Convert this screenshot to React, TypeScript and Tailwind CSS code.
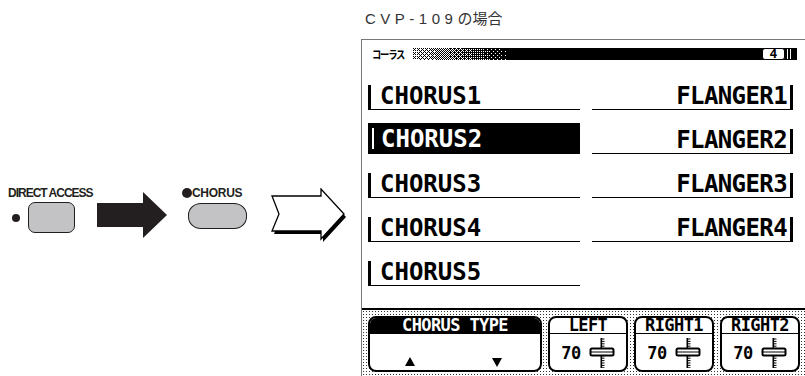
import React from "react";

const lcd = "font-['DejaVu_Sans_Mono','Liberation_Mono',monospace] font-bold";
const helv = "font-['Liberation_Sans',Arial,sans-serif] font-bold";

// ordered dither for the header fade
const bayer = [
  [0, 8, 2, 10],
  [12, 4, 14, 6],
  [3, 11, 1, 9],
  [15, 7, 13, 5],
];
function ditherPath(w: number, h: number) {
  let d = "";
  for (let x = 0; x < w; x++) {
    for (let y = 0; y < h; y++) {
      const t = 0.3 + 0.7 * (x / w);
      if ((bayer[y % 4][x % 4] + 0.5) / 16 < t) d += `M${x} ${y}h1v1h-1z`;
    }
  }
  return d;
}
const DITHER = ditherPath(100, 12);

function SolidArrow() {
  return (
    <svg width="70" height="46" viewBox="0 0 70 46" className="shrink-0">
      <path d="M0 11H46V0L70 23L46 46V35H0Z" fill="#231f20" />
    </svg>
  );
}

function OutlineArrow() {
  const pts = "1,8 50,8 50,1 73,26 50,51 50,43 1,43 8,26";
  return (
    <svg width="78" height="56" viewBox="0 0 78 56" className="shrink-0">
      <polygon points={pts} transform="translate(2,3)" fill="#000" />
      <polygon points={pts} fill="#fff" stroke="#000" strokeWidth="1.3" strokeLinejoin="miter" />
    </svg>
  );
}

function Fader() {
  const ticks = [];
  for (let y = 1; y < 30; y += 2.4) ticks.push(`M13 ${y.toFixed(1)}h2.5`);
  return (
    <svg width="26" height="30" viewBox="0 0 26 30">
      <rect x="11.5" y="0" width="1.6" height="30" fill="#000" />
      <path d={ticks.join("")} stroke="#000" strokeWidth="1" />
      <rect x="1.5" y="10.5" width="23" height="7" rx="1.5" fill="#fff" stroke="#000" strokeWidth="2" />
      <path d="M2 14H24" stroke="#000" strokeWidth="1" />
    </svg>
  );
}

function Tri({ down }: { down?: boolean }) {
  return (
    <svg width="10" height="10" viewBox="0 0 10 10">
      <path d={down ? "M0 1H10L5 10Z" : "M5 0L10 9H0Z"} fill="#000" />
    </svg>
  );
}

function LeftCell({ label, selected }: { label: string; selected?: boolean }) {
  if (selected) {
    return (
      <div className="ml-[6px] w-[212px] h-[31px] bg-black flex items-center">
        <div className="ml-[4px] w-[2px] h-[21px] bg-white" />
        <span className={`${lcd} ml-[7px] text-white text-[24px] leading-[22px]`}>{label}</span>
      </div>
    );
  }
  return (
    <div className="ml-[6px] w-[212px] h-[25px] border-l-[3px] border-b border-black">
      <span className={`${lcd} block pl-[9px] text-black text-[24px] leading-[22px]`}>{label}</span>
    </div>
  );
}

function RightCell({ label }: { label?: string }) {
  if (!label) return null;
  return (
    <div className="ml-[12px] w-[201px] h-[25px] border-r-[3px] border-b border-black">
      <span className={`${lcd} block pr-[3px] text-right text-black text-[24px] leading-[22px] tracking-[-0.6px]`}>{label}</span>
    </div>
  );
}

const rows = [
  { l: "CHORUS1", r: "FLANGER1" },
  { l: "CHORUS2", r: "FLANGER2", sel: true },
  { l: "CHORUS3", r: "FLANGER3" },
  { l: "CHORUS4", r: "FLANGER4" },
  { l: "CHORUS5" },
];

function PanButton({ title }: { title: string }) {
  return (
    <div className="w-[80px] h-[56px] border-2 border-black rounded-[8px] bg-white overflow-hidden flex flex-col">
      <div className={`${lcd} h-[16px] border-b border-black text-center text-[17px] leading-[15px] tracking-[-0.6px]`}>{title}</div>
      <div className="flex-1 flex items-center justify-center gap-[8px] pt-[2px]">
        <span className={`${lcd} text-[17px] leading-[18px] tracking-[-0.6px]`}>70</span>
        <Fader />
      </div>
    </div>
  );
}

export default function App() {
  return (
    <div className="w-[805px] h-[376px] bg-white flex overflow-hidden">
      {/* left: key sequence */}
      <div className="w-[361px] shrink-0 flex items-start pt-[188px] pl-[8px]">
        <div className="w-[86px] shrink-0">
          <div className={`${helv} text-[12px] leading-[10px] h-[10px] tracking-[-1px] text-[#231f20]`}>DIRECT ACCESS</div>
          <div className="flex items-center mt-[4px]">
            <div className="ml-[4px] w-[8px] h-[8px] rounded-full bg-[#231f20]" />
            <div className="ml-[8px] w-[47px] h-[31px] rounded-[7px] border border-[#231f20] bg-[#c3c3c5]" />
          </div>
        </div>
        <div className="ml-[3px] mt-[4px]">
          <SolidArrow />
        </div>
        <div className="ml-[15px] w-[70px] shrink-0">
          <div className="flex items-center h-[10px]">
            <div className="w-[10px] h-[10px] rounded-full bg-[#231f20]" />
            <span className={`${helv} text-[12px] leading-[10px] tracking-[-0.3px] text-[#231f20]`}>CHORUS</span>
          </div>
          <div className="ml-[6px] mt-[5px] w-[59px] h-[26px] rounded-[13px/12px] border border-[#231f20] bg-[#c3c3c5]" />
        </div>
        <div className="ml-[19px]">
          <OutlineArrow />
        </div>
      </div>

      {/* right: LCD page */}
      <div className="flex-1 flex flex-col">
        <div className="h-[39px] pt-[9px] pl-[4px] text-[15px] leading-[20px] text-[#333] font-['Liberation_Sans','Noto_Sans_CJK_JP',sans-serif]">
          <span className="tracking-[4.5px]">CVP-109</span>
          <span>の場合</span>
        </div>
        <div className="flex-1 border-t border-l border-[#777] flex flex-col">
          <div className="mt-[8px] h-[12px] flex items-stretch mr-[8px]">
            <div className="w-[51px] pl-[10px] flex items-center">
              <span className="text-[11px] leading-[12px] font-bold font-['Noto_Sans_CJK_JP',sans-serif] tracking-[-1.5px] scale-x-[0.85] origin-left">コーラス</span>
            </div>
            <svg width="100" height="12" viewBox="0 0 100 12" shapeRendering="crispEdges" className="shrink-0">
              <path d={DITHER} fill="#000" />
            </svg>
            <div className="flex-1 bg-black flex items-center justify-end">
              <div className={`${lcd} w-[23px] h-[12px] rounded-[3px] bg-white border border-black flex items-center justify-center text-[13px] leading-[10px]`}>4</div>
              <div className="ml-[2px] w-[1px] h-[10px] bg-white" />
              <div className="ml-[2px] w-[1px] h-[10px] bg-white" />
              <div className="w-[6px]" />
            </div>
          </div>

          <div className="mt-[6px] flex flex-col">
            {rows.map((r) => (
              <div key={r.l} className="h-[44px] flex items-end">
                <LeftCell label={r.l} selected={r.sel} />
                <RightCell label={r.r} />
              </div>
            ))}
          </div>

          <div className="mt-[22px] h-[2px] bg-black" />
          <div className="flex-1 pl-[6px] pt-[6px] flex gap-[6px] bg-[radial-gradient(circle,#333_0.7px,transparent_1px)] bg-[length:3px_3px]">
            <div className="w-[174px] h-[56px] border-2 border-black rounded-[8px] bg-white overflow-hidden flex flex-col">
              <div className={`${lcd} h-[16px] bg-black text-white text-center text-[17px] leading-[15px] tracking-[-0.6px]`}>CHORUS TYPE</div>
              <div className="flex-1 flex items-end justify-between pl-[35px] pr-[38px] pb-[3px]">
                <Tri />
                <Tri down />
              </div>
            </div>
            <PanButton title="LEFT" />
            <PanButton title="RIGHT1" />
            <PanButton title="RIGHT2" />
          </div>
        </div>
      </div>
    </div>
  );
}
